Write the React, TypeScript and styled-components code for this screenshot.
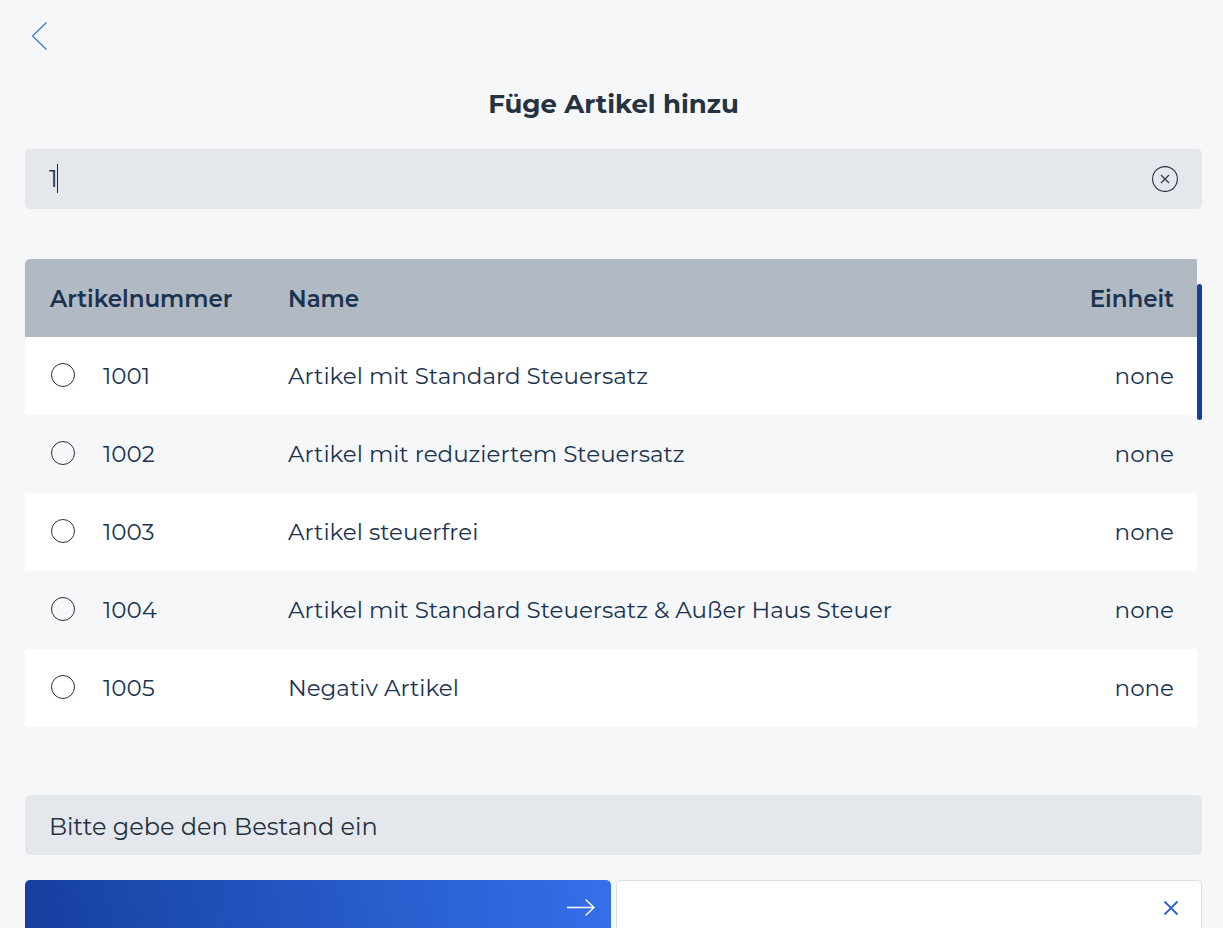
import React, { useState } from "react";
import styled, { createGlobalStyle } from "styled-components";

const GlobalStyle = createGlobalStyle`
  *, *::before, *::after { box-sizing: border-box; }
  body { margin: 0; background: #f5f7f9; }
  body, button, input { font-family: Montserrat, Inter, "Liberation Sans", sans-serif; }
`;

const Page = styled.main`
  display: flex;
  flex-direction: column;
  height: 100vh;
  overflow: hidden;
  padding: 20px 21px 0 25px;
  color: #26323f;
`;

const BackButton = styled.button`
  align-self: flex-start;
  flex: none;
  display: flex;
  width: 28px;
  height: 32px;
  padding: 0;
  border: 0;
  background: none;
  cursor: pointer;
`;

const Title = styled.h1`
  flex: none;
  margin: 36px 0 29px;
  font-size: 26px;
  line-height: 32px;
  font-weight: 700;
  text-align: center;
`;

const Field = styled.div`
  position: relative;
  flex: none;
  display: flex;
  align-items: center;
  height: 60px;
  padding-right: 24px;
  border-radius: 5px;
  background: #e4e8ec;
`;

const TextInput = styled.input`
  flex: 1;
  min-width: 0;
  height: 60px;
  padding: 0 24px 2px;
  border: 0;
  outline: 0;
  background: none;
  color: #26323f;
  font-size: 24px;
  caret-color: transparent;
  &::placeholder { color: #26323f; opacity: 1; }
  &:placeholder-shown { padding: 2px 24px 0; }
`;

const Caret = styled.span`
  position: absolute;
  left: 32px;
  top: 15px;
  width: 1px;
  height: 29px;
  background: #1b2733;
`;

const ClearButton = styled.button`
  display: flex;
  padding: 0;
  border: 0;
  background: none;
  cursor: pointer;
`;

const ListArea = styled.section`
  flex: none;
  display: grid;
  grid-template-columns: 1fr 5px;
  margin: 50px 0 68px;
`;

const ScrollThumb = styled.div`
  height: 136px;
  margin-top: 25px;
  border-radius: 3px;
  background: #153f9e;
`;

const Table = styled.table`
  width: 100%;
  table-layout: fixed;
  border-collapse: collapse;
  border-radius: 5px 2px 0 0;
  overflow: hidden;
  color: #1a3350;
  font-size: 23px;
  line-height: 28px;
`;

const HeadRow = styled.tr`
  height: 78px;
  background: #b1b9c2;
`;

const Row = styled.tr`
  height: 78px;
  &:nth-child(odd) { background: #fff; }
`;

const HeadCell = styled.th<{ $width?: number; $end?: boolean }>`
  width: ${(p) => (p.$width ? `${p.$width}px` : "auto")};
  padding: 2px ${(p) => (p.$end ? 23 : 0)}px 0 ${(p) => (p.$end ? 0 : 25)}px;
  font-weight: 600;
  text-align: ${(p) => (p.$end ? "right" : "left")};
`;

const Cell = styled.td<{ $end?: boolean }>`
  padding: 0 ${(p) => (p.$end ? 23 : 0)}px 0 ${(p) => (p.$end ? 0 : 25)}px;
  text-align: ${(p) => (p.$end ? "right" : "left")};
`;

const Choice = styled.label`
  display: flex;
  align-items: flex-start;
  gap: 28px;
  cursor: pointer;
`;

const Radio = styled.input`
  appearance: none;
  width: 24px;
  height: 24px;
  margin: 1px 0 0 1px;
  border: 1px solid #26323f;
  border-radius: 50%;
  background: transparent;
  &:checked { box-shadow: inset 0 0 0 5px #fff; background: #2f6ae6; }
`;

const Actions = styled.div`
  flex: none;
  display: grid;
  grid-template-columns: 1fr 1fr;
  gap: 5px;
  margin-top: 25px;
`;

const ActionButton = styled.button<{ $primary?: boolean }>`
  display: flex;
  align-items: center;
  justify-content: flex-end;
  height: 56px;
  padding: 0 ${(p) => (p.$primary ? 15 : 22)}px;
  border: ${(p) => (p.$primary ? "0" : "1px solid #d9dee4")};
  border-radius: 5px;
  background: ${(p) => (p.$primary ? "linear-gradient(80deg, #153f9e, #3470ea)" : "#fff")};
  cursor: pointer;
`;

const articles = [
  { id: "1001", name: "Artikel mit Standard Steuersatz", unit: "none" },
  { id: "1002", name: "Artikel mit reduziertem Steuersatz", unit: "none" },
  { id: "1003", name: "Artikel steuerfrei", unit: "none" },
  { id: "1004", name: "Artikel mit Standard Steuersatz & Außer Haus Steuer", unit: "none" },
  { id: "1005", name: "Negativ Artikel", unit: "none" },
];

export default function App() {
  const [query, setQuery] = useState("1");
  const [stock, setStock] = useState("");
  const [selected, setSelected] = useState("");

  return (
    <>
      <GlobalStyle />
      <Page>
        <BackButton type="button" aria-label="Zurück">
          <svg width="28" height="32" fill="none" stroke="#3f76e4" strokeWidth="1.3">
            <path d="M21.500 2.500 7.500 16l14 13.500" />
          </svg>
        </BackButton>
        <Title>Füge Artikel hinzu</Title>
        <Field>
          <TextInput
            type="text"
            aria-label="Artikel suchen"
            value={query}
            onChange={(e) => setQuery(e.target.value)}
          />
          {query === "1" && <Caret />}
          <ClearButton type="button" aria-label="Suche löschen" onClick={() => setQuery("")}>
            <svg width="26" height="26" fill="none" stroke="#26323f" strokeWidth="1.1">
              <circle cx="13" cy="13" r="12.4" />
              <path d="m9 9 8 8m0-8-8 8" />
            </svg>
          </ClearButton>
        </Field>
        <ListArea>
          <Table>
            <thead>
              <HeadRow>
                <HeadCell $width={238}>Artikelnummer</HeadCell>
                <HeadCell>Name</HeadCell>
                <HeadCell $width={150} $end>Einheit</HeadCell>
              </HeadRow>
            </thead>
            <tbody>
              {articles.map((a) => (
                <Row key={a.id}>
                  <Cell>
                    <Choice>
                      <Radio
                        type="radio"
                        name="article"
                        checked={selected === a.id}
                        onChange={() => setSelected(a.id)}
                      />
                      {a.id}
                    </Choice>
                  </Cell>
                  <Cell>{a.name}</Cell>
                  <Cell $end>{a.unit}</Cell>
                </Row>
              ))}
            </tbody>
          </Table>
          <ScrollThumb />
        </ListArea>
        <Field>
          <TextInput
            type="text"
            aria-label="Bestand"
            placeholder="Bitte gebe den Bestand ein"
            value={stock}
            onChange={(e) => setStock(e.target.value)}
          />
        </Field>
        <Actions>
          <ActionButton type="button" $primary aria-label="Weiter">
            <svg width="30" height="20" fill="none" stroke="#fff" strokeWidth="1.4">
              <path d="M1 9.500h27M19.500 1.500 28 9.500l-8.500 8" />
            </svg>
          </ActionButton>
          <ActionButton type="button" aria-label="Abbrechen">
            <svg width="16" height="16" fill="none" stroke="#2b62d3" strokeWidth="1.8">
              <path d="m1.500 1.500 13 13m0-13-13 13" />
            </svg>
          </ActionButton>
        </Actions>
      </Page>
    </>
  );
}
